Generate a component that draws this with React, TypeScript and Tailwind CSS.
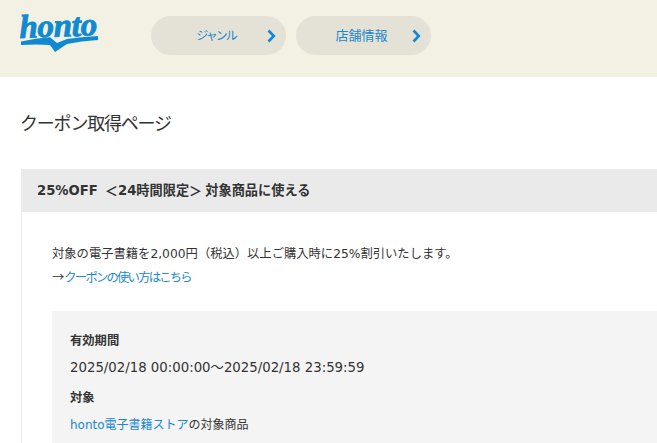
const FONT = "font-['DejaVu_Sans','Noto_Sans_CJK_JP',sans-serif]";

function Chevron() {
  return (
    <svg width="9" height="14" viewBox="0 0 9 14" fill="none" className="shrink-0">
      <path d="M1.5 1.5 L6.8 7 L1.5 12.5" stroke="#0f8ad2" strokeWidth="2.6" />
    </svg>
  );
}

function NavButton({ children }: { children: React.ReactNode }) {
  return (
    <a className="flex h-[39px] w-[135px] items-center rounded-[20px] bg-[#e4e2d6] pr-[10px] text-[#1b87cc]">
      {children}
      <Chevron />
    </a>
  );
}

function Logo() {
  return (
    <div className="relative h-[37px] w-[77px]">
      <span className="absolute left-[-1px] top-[-6px] origin-bottom-left -rotate-2 font-['Liberation_Serif',serif] text-[33px] font-bold italic leading-[36px] tracking-[-0.3px] text-[#0f8ad2] [-webkit-text-stroke:0.9px_#0f8ad2]">
        honto
      </span>
      <svg width="77" height="17" viewBox="0 0 77 17" className="absolute left-0 top-[20px]">
        <path
          d="M0 6.5 Q15 3 29 2.3 L36 8 L46 4 Q60 2 77 1 L77 5 Q60 6 46 9 L34 17 L29 10 Q15 9 0 10 Z"
          fill="#0f8ad2"
        />
      </svg>
    </div>
  );
}

export default function App() {
  return (
    <div className={`${FONT} h-[443px] w-[657px] overflow-hidden bg-white text-[#333]`}>
      <header className="flex h-[77px] bg-[#f3f0e4] pl-[21px]">
        <div className="pt-[15px]">
          <Logo />
        </div>
        <nav className="ml-[53px] flex items-start gap-[10px] pt-[16px]">
          <NavButton>
            <span className="flex-1 pl-[14px] pt-[1px] text-center text-[12px] tracking-[-2px]">ジャンル</span>
          </NavButton>
          <NavButton>
            <span className="flex-1 pl-[15px] pt-[1px] text-center text-[13px]">店舗情報</span>
          </NavButton>
        </nav>
      </header>

      <main className="w-[900px] pl-[21px]">
        <h1 className="mt-[33px] ml-[-1px] text-[18px] font-normal leading-[28px] tracking-[-1.2px]">クーポン取得ページ</h1>

        <section className="mt-[31px] border-l border-[#eaeaea]">
          <h2 className="flex h-[43px] items-center bg-[#eaeaea] pl-[15px] text-[13.2px] font-bold">
            <span>25%OFF</span>
            <span className="ml-[7px] font-['Noto_Sans_CJK_JP',sans-serif]">＜</span>
            <span>24時間限定</span>
            <span className="font-['Noto_Sans_CJK_JP',sans-serif]">＞</span>
            <span className="ml-[3px]">対象商品に使える</span>
          </h2>
          <div className="pl-[30px] pt-[31px]">
            <p className="text-[12.3px] leading-[22.5px]">
              対象の電子書籍を2,000円（税込）以上ご購入時に25%割引いたします。
              <br />
              <span className="font-['Noto_Sans_CJK_JP',sans-serif]">→</span>
              <a className="text-[#1b87cc] tracking-[-1.75px]">クーポンの使い方はこちら</a>
            </p>
            <dl className="mt-[22px] bg-[#f4f4f4] px-[18px] pb-[20px] pt-[21px] text-[12.3px] leading-[18px]">
              <dt className="font-bold">有効期間</dt>
              <dd className="mt-[9px] text-[13.3px]">2025/02/18 00:00:00～2025/02/18 23:59:59</dd>
              <dt className="mt-[12px] font-bold">対象</dt>
              <dd className="mt-[9px] text-[12px]">
                <a className="text-[#1b87cc]">honto電子書籍ストア</a>の対象商品
              </dd>
            </dl>
          </div>
        </section>
      </main>
    </div>
  );
}
